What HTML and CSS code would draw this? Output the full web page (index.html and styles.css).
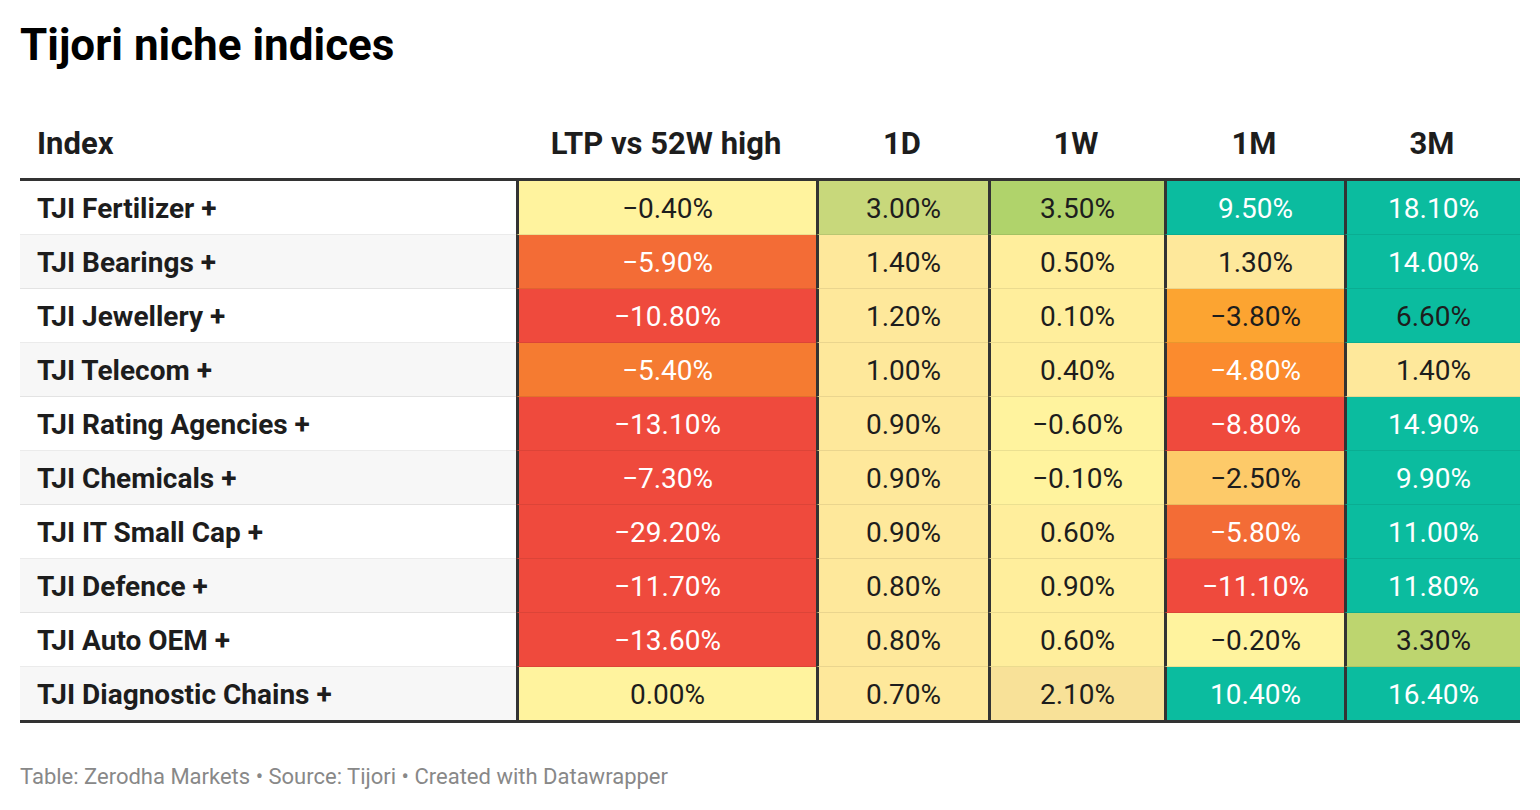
FILE: index.html
```html
<!DOCTYPE html>
<html lang="en">
<head>
<meta charset="utf-8">
<title>Tijori niche indices</title>
<link rel="stylesheet" href="styles.css">
</head>
<body>
<main class="chart">
  <h1 class="title">Tijori niche indices</h1>
  <table class="heat">
    <thead>
      <tr>
        <th class="h-name">Index</th>
        <th class="h-ltp">LTP vs 52W high</th>
        <th class="h-1d">1D</th>
        <th class="h-1w">1W</th>
        <th class="h-1m">1M</th>
        <th class="h-3m">3M</th>
      </tr>
    </thead>
    <tbody>
      <tr>
        <td class="name">TJI Fertilizer +</td>
        <td class="v y0">−0.40%</td>
        <td class="v g1">3.00%</td>
        <td class="v g2">3.50%</td>
        <td class="v t">9.50%</td>
        <td class="v t">18.10%</td>
      </tr>
      <tr>
        <td class="name">TJI Bearings +</td>
        <td class="v o1">−5.90%</td>
        <td class="v y2">1.40%</td>
        <td class="v y1">0.50%</td>
        <td class="v y2">1.30%</td>
        <td class="v t">14.00%</td>
      </tr>
      <tr>
        <td class="name">TJI Jewellery +</td>
        <td class="v r">−10.80%</td>
        <td class="v y2">1.20%</td>
        <td class="v y1">0.10%</td>
        <td class="v o4">−3.80%</td>
        <td class="v t dark">6.60%</td>
      </tr>
      <tr>
        <td class="name">TJI Telecom +</td>
        <td class="v o2">−5.40%</td>
        <td class="v y2">1.00%</td>
        <td class="v y1">0.40%</td>
        <td class="v o3">−4.80%</td>
        <td class="v y2">1.40%</td>
      </tr>
      <tr>
        <td class="name">TJI Rating Agencies +</td>
        <td class="v r">−13.10%</td>
        <td class="v y2">0.90%</td>
        <td class="v y0">−0.60%</td>
        <td class="v r">−8.80%</td>
        <td class="v t">14.90%</td>
      </tr>
      <tr>
        <td class="name">TJI Chemicals +</td>
        <td class="v r">−7.30%</td>
        <td class="v y2">0.90%</td>
        <td class="v y0">−0.10%</td>
        <td class="v o5">−2.50%</td>
        <td class="v t">9.90%</td>
      </tr>
      <tr>
        <td class="name">TJI IT Small Cap +</td>
        <td class="v r">−29.20%</td>
        <td class="v y2">0.90%</td>
        <td class="v y1">0.60%</td>
        <td class="v o1">−5.80%</td>
        <td class="v t">11.00%</td>
      </tr>
      <tr>
        <td class="name">TJI Defence +</td>
        <td class="v r">−11.70%</td>
        <td class="v y2">0.80%</td>
        <td class="v y1">0.90%</td>
        <td class="v r">−11.10%</td>
        <td class="v t">11.80%</td>
      </tr>
      <tr>
        <td class="name">TJI Auto OEM +</td>
        <td class="v r">−13.60%</td>
        <td class="v y2">0.80%</td>
        <td class="v y1">0.60%</td>
        <td class="v y0">−0.20%</td>
        <td class="v g3">3.30%</td>
      </tr>
      <tr>
        <td class="name">TJI Diagnostic Chains +</td>
        <td class="v y0">0.00%</td>
        <td class="v y2">0.70%</td>
        <td class="v y3">2.10%</td>
        <td class="v t">10.40%</td>
        <td class="v t">16.40%</td>
      </tr>
    </tbody>
  </table>
  <p class="footer">Table: Zerodha Markets • Source: Tijori • Created with Datawrapper</p>
</main>
</body>
</html>
```
FILE: styles.css
```css
html, body {
  margin: 0;
  padding: 0;
  background: #ffffff;
}

body {
  font-family: Roboto, "Liberation Sans", sans-serif;
  color: #1d1d1d;
}

.chart {
  padding: 0 20px;
}

.title {
  margin: 0;
  padding-top: 20px;
  font-size: 44px;
  line-height: 50px;
  font-weight: 700;
  color: #000000;
}

.heat {
  width: 1500px;
  table-layout: fixed;
  border-collapse: separate;
  border-spacing: 0;
}

.heat th,
.heat td {
  box-sizing: border-box;
  padding: 0;
}

.heat th {
  padding: 56px 0 16px;
  font-size: 31px;
  line-height: 36px;
  font-weight: 700;
  text-align: center;
  color: #1d1d1d;
  border-bottom: 3px solid #333333;
  white-space: nowrap;
}

.heat th.h-name {
  width: 496px;
  text-align: left;
  padding-left: 17px;
}
.heat th.h-ltp { width: 300px; }
.heat th.h-1d  { width: 172px; }
.heat th.h-1w  { width: 176px; }
.heat th.h-1m  { width: 180px; }
.heat th.h-3m  { width: 176px; }

.heat td {
  height: 54px;
  border-bottom: 1px solid rgba(0, 0, 0, 0.08);
}

.heat tbody tr:last-child td {
  height: 56px;
  border-bottom: 3px solid #333333;
}

.heat td.name {
  padding: 3px 0 0 17px;
  font-size: 28px;
  line-height: 50px;
  font-weight: 700;
  color: #1d1d1d;
  background: #ffffff;
  white-space: nowrap;
}

.heat tbody tr:nth-child(even) td.name {
  background: #f7f7f7;
}

.heat td.v {
  padding: 3px 0 0;
  border-left: 3px solid #333333;
  text-align: center;
  font-size: 28px;
  line-height: 50px;
  font-weight: 400;
  color: #1d1d1d;
  white-space: nowrap;
}

.y0 { background: #fff39e; }
.y1 { background: #ffee9c; }
.y2 { background: #fee89b; }
.y3 { background: #f8e198; }
.g1 { background: #c8d87b; }
.g2 { background: #b0d36b; }
.g3 { background: #bdd56f; }
.o4 { background: #fca431; }
.o5 { background: #fdca69; }

.heat td.t  { background: #0bbc9f; color: #ffffff; }
.heat td.t.dark { color: #1d1d1d; }
.heat td.r  { background: #ef4a3d; color: #ffffff; }
.heat td.o1 { background: #f36c36; color: #ffffff; }
.heat td.o2 { background: #f57b31; color: #ffffff; }
.heat td.o3 { background: #fb8b2e; color: #ffffff; }

.footer {
  margin: 42px 0 0;
  font-size: 22px;
  line-height: 24px;
  color: #888888;
}
```
